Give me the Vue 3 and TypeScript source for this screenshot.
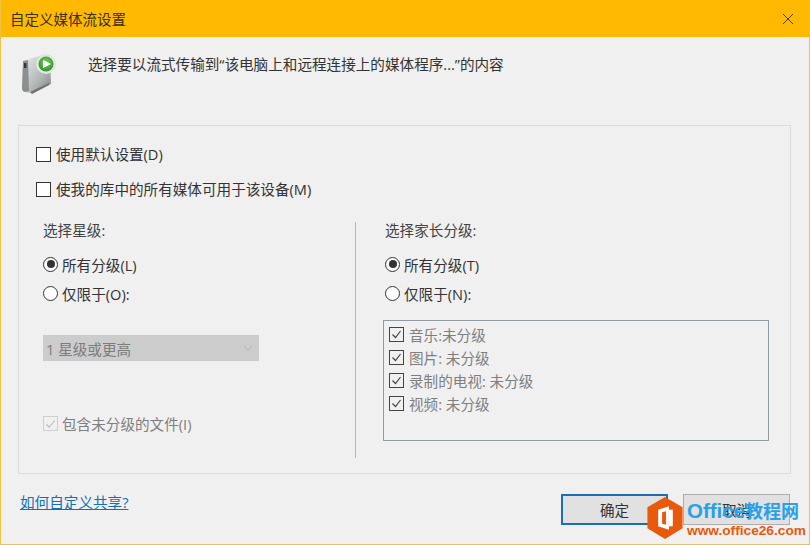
<script setup lang="ts">
const items: string[] = ['音乐:未分级', '图片: 未分级', '录制的电视: 未分级', '视频: 未分级']
</script>

<template>
  <div class="dialog">
    <header class="titlebar">
      <span class="title">自定义媒体流设置</span>
      <svg class="close" width="12" height="12" viewBox="0 0 12 12"><path d="M1 1l10 10M11 1L1 11" stroke="#4a3a10" stroke-width="1" fill="none" /></svg>
    </header>
    <div class="body">
      <div class="heading">
        <svg class="media" width="36" height="42" viewBox="0 0 36 42">
          <defs>
            <linearGradient id="dev" x1="0" y1="0" x2="1" y2="1">
              <stop offset="0" stop-color="#eceeee" />
              <stop offset="0.6" stop-color="#b4b8b8" />
              <stop offset="1" stop-color="#7d8181" />
            </linearGradient>
            <radialGradient id="play" cx="0.5" cy="0.4" r="0.6">
              <stop offset="0" stop-color="#7bd35f" />
              <stop offset="1" stop-color="#2f8f2f" />
            </radialGradient>
          </defs>
          <path d="M2 8 L22 2 L29 5 L30 31 L12 40 L4 39 Q1 38 1 35 Z" fill="url(#dev)" />
          <path d="M2 8 L7 7 L8 38 L4 39 Q1 38 1 35 Z" fill="#8b8f8f" />
          <rect x="3" y="10" width="2.5" height="5" fill="#2f3a3a" />
          <path d="M9 39 L28 30 L28 32 L11 41 Z" fill="#6f7373" />
          <circle cx="25" cy="11" r="10" fill="#dfe8dc" />
          <circle cx="25" cy="11" r="7.5" fill="url(#play)" />
          <path d="M22 7 L30 11 L22 15 Z" fill="#fff" />
        </svg>
        <span class="heading-text">选择要以流式传输到“该电脑上和远程连接上的媒体程序...”的内容</span>
      </div>

      <section class="panel">
        <label class="check top first"><span class="box"></span>使用默认设置(D)</label>
        <label class="check top second"><span class="box"></span>使我的库中的所有媒体可用于该设备(M)</label>

        <div class="columns">
          <div class="col left">
            <div class="group-title">选择星级:</div>
            <div class="radio"><span class="dot on"></span>所有分级(L)</div>
            <div class="radio r2"><span class="dot"></span>仅限于(O):</div>
            <div class="select">
              <span>1 星级或更高</span>
              <svg width="10" height="6" viewBox="0 0 10 6"><path d="M0.5 0.5L5 5l4.5-4.5" fill="none" stroke="#b0b0b0" /></svg>
            </div>
            <div class="include">
              <span class="box dim">
                <svg width="14" height="14" viewBox="0 0 14 14"><path d="M2.5 7.5l3 3 6-7" fill="none" stroke="#b9b9b9" stroke-width="1.2" /></svg>
              </span>
              包含未分级的文件(I)
            </div>
          </div>
          <div class="divider"></div>
          <div class="col right">
            <div class="group-title">选择家长分级:</div>
            <div class="radio"><span class="dot on"></span>所有分级(T)</div>
            <div class="radio r2"><span class="dot"></span>仅限于(N):</div>
            <div class="listbox">
              <div v-for="item in items" :key="item" class="list-row">
                <span class="box small">
                  <svg width="13" height="13" viewBox="0 0 13 13"><path d="M2.5 6.5l3 3 5-6.5" fill="none" stroke="#444" stroke-width="1.2" /></svg>
                </span>
                {{ item }}
              </div>
            </div>
          </div>
        </div>
      </section>

      <footer class="footer">
        <a class="link">如何自定义共享?</a>
        <div class="buttons">
          <button class="btn primary">确定</button>
          <button class="btn">取消</button>
        </div>
      </footer>
    </div>

    <div class="mark">
      <svg class="hex" width="36" height="42" viewBox="0 0 36 43">
        <path d="M18 0 L36 10.5 V32 L18 43 L0 32 V10.5 Z" fill="#e8590c" />
        <path d="M11 13 L22 9.5 V33.5 L11 30 Z" fill="#fff" />
        <path d="M15 15.5 L19 14.6 V28.5 L15 27.5 Z" fill="#e8590c" />
        <path d="M22 13 H26 V30 H22 Z" fill="#fff" />
      </svg>
      <div class="mark-text">
        <div class="mark-top"><span class="mark-latin">Office</span>教程网</div>
        <div class="mark-url">www.office26.com</div>
      </div>
    </div>
  </div>
</template>

<style scoped>
.dialog {
  position: relative;
  width: 810px;
  height: 545px;
  box-sizing: border-box;
  background: #f0f0f0;
  border: 1px solid #f0c040;
  border-top: 0;
  font-family: "Open Sans", "Noto Sans CJK SC", sans-serif;
  color: #333;
  overflow: hidden;
}
.titlebar {
  height: 37px;
  margin: 0 -1px;
  background: #ffb900;
  display: flex;
  align-items: center;
  justify-content: space-between;
  padding: 0 16px 0 10px;
}
.title { font-size: 14.5px; color: #3a3008; }
.body { padding: 0 18px 0 17px; }
.heading {
  height: 88px;
  display: flex;
  align-items: flex-start;
}
.media { margin: 16px 0 0 3px; }
.heading-text {
  margin: 17px 0 0 31px;
  font-size: 14.6px;
  line-height: 20px;
  color: #333;
}
.panel {
  height: 349px;
  box-sizing: border-box;
  border: 1px solid #dcdcdc;
  padding: 20px 0 0 17px;
  font-size: 14.6px;
}
.check {
  display: flex;
  align-items: center;
  height: 16px;
  line-height: 16px;
}
.top.second { margin-top: 19px; }
.box {
  width: 13px;
  height: 13px;
  flex: none;
  border: 1px solid #333;
  background: #fff;
  margin-right: 5px;
  display: inline-flex;
  box-sizing: content-box;
}
.columns {
  display: flex;
  margin-top: 23px;
  margin-left: 7px;
}
.col.left { width: 312px; }
.divider { width: 1px; height: 236px; background: #b4b4b4; margin-top: 2px; }
.col.right { margin-left: 29px; width: 386px; }
.group-title { height: 20px; line-height: 20px; color: #444; }
.radio {
  display: flex;
  align-items: center;
  height: 20px;
  margin-top: 14px;
  color: #333;
}
.radio.r2 { margin-top: 9px; }
.dot {
  width: 13px;
  height: 13px;
  border: 1px solid #333;
  border-radius: 50%;
  background: #fff;
  margin-right: 4px;
  flex: none;
  box-sizing: content-box;
  position: relative;
}
.dot.on::after {
  content: "";
  position: absolute;
  left: 2.5px;
  top: 2.5px;
  width: 8px;
  height: 8px;
  background: #333;
  border-radius: 50%;
}
.select {
  width: 216px;
  height: 26px;
  box-sizing: border-box;
  margin-top: 32px;
  background: #cccccc;
  color: #7c7c7c;
  display: flex;
  align-items: center;
  justify-content: space-between;
  padding: 0 6px 0 3px;
}
.include {
  display: flex;
  align-items: center;
  margin-top: 52px;
  height: 20px;
  color: #7f7f7f;
}
.box.dim {
  background: #f0f0f0;
  border-color: #cfcfcf;
  margin-right: 4px;
}
.listbox {
  width: 386px;
  height: 121px;
  margin: 17px 0 0 -2px;
  box-sizing: border-box;
  border: 1px solid #8f9aa5;
  padding: 2px 0 0 5px;
}
.list-row {
  display: flex;
  align-items: center;
  height: 23px;
  color: #7f7f7f;
}
.box.small {
  width: 13px;
  height: 13px;
  background: #f0f0f0;
  border-color: #444;
  margin-right: 5px;
}
.footer {
  display: flex;
  justify-content: space-between;
  align-items: flex-start;
  padding-top: 19px;
}
.link {
  font-size: 14.6px;
  line-height: 20px;
  margin: -1px 0 0 2px;
  color: #0f6fb8;
  text-decoration: underline;
}
.buttons {
  display: flex;
  gap: 15px;
  margin: 1px 1px 0 0;
}
.btn {
  width: 107px;
  height: 31px;
  box-sizing: border-box;
  font: inherit;
  font-size: 14.6px;
  color: #333;
  background: #e1e1e1;
  border: 1px solid #adadad;
  padding: 0;
}
.btn.primary { border: 2px solid #1c6fb5; }
.mark {
  position: absolute;
  left: 646px;
  top: 497px;
  display: flex;
  align-items: flex-start;
  gap: 4px;
}
.mark-text { margin-top: 1px; }
.mark-top {
  font-family: "Noto Sans CJK SC", sans-serif;
  font-weight: 700;
  font-size: 18px;
  line-height: 24px;
  color: #2b9fe8;
  white-space: nowrap;
}
.mark-latin {
  font-family: "Liberation Sans", sans-serif;
  font-size: 20.5px;
}
.mark-url {
  font-family: "Liberation Sans", sans-serif;
  font-weight: 700;
  font-size: 13.7px;
  line-height: 16px;
  color: #e8590c;
  white-space: nowrap;
}
</style>

<style>
html, body { margin: 0; padding: 0; background: #f0f0f0; }
</style>
